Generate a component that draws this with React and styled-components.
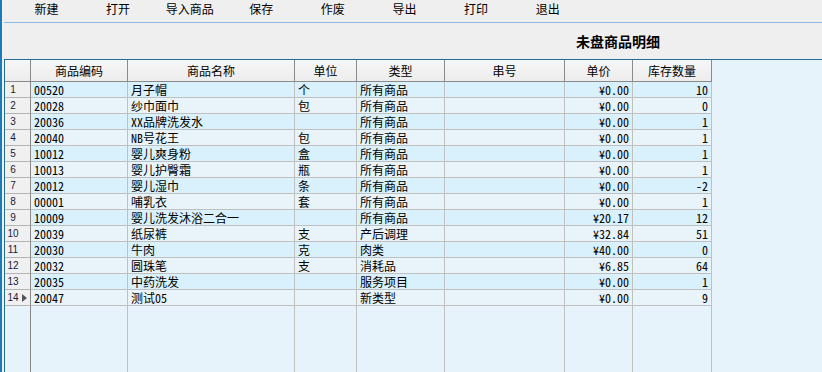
import styled, { createGlobalStyle } from "styled-components"

const GlobalStyle = createGlobalStyle`
  html, body {
    margin: 0;
    padding: 0;
    background: #efefef;
  }
  body {
    font-family: "Noto Sans Mono CJK SC", "Noto Sans CJK SC", sans-serif;
    font-size: 12px;
    color: #000;
  }
`

const COLS = "26px 97px 167px 62px 88px 120px 68px 79px"

const Frame = styled.div`
  height: 372px;
  box-sizing: border-box;
  border-left: 2px solid #1c7ab6;
  padding-left: 2px;
  display: flex;
  flex-direction: column;
  overflow: hidden;
`
const MenuBar = styled.div`
  height: 22px;
  border-bottom: 1px solid #8cb9e8;
  display: flex;
  padding-left: 6.7px;
`
const MenuItem = styled.div`
  width: 71.6px;
  text-align: center;
  line-height: 17px;
  cursor: default;
  white-space: nowrap;
`
const TitleRow = styled.div`
  height: 36px;
  display: flex;
  align-items: center;
  padding-left: 572px;
`
const Title = styled.h1`
  margin: 0;
  font-size: 14px;
  font-weight: bold;
  font-family: "Noto Sans CJK SC", sans-serif;
`
const Grid = styled.div`
  flex: 1;
  display: flex;
  flex-direction: column;
  border-top: 1px solid #226e95;
  border-left: 1px solid #226e95;
  background: #e6f3fa;
`
const Row = styled.div`
  display: grid;
  grid-template-columns: ${COLS};
  width: max-content;
`
const HeadCell = styled.div`
  height: 21px;
  line-height: 21px;
  text-align: center;
  background: linear-gradient(#f7f7f7, #ececec);
  border-right: 1px solid #8a8a8a;
  border-bottom: 1px solid #8a8a8a;
  white-space: nowrap;
  overflow: hidden;
`
const Cell = styled.div`
  height: 15px;
  line-height: 15px;
  padding: 0 ${(p) => (p.$right ? "3px" : "0")} 0 ${(p) => (p.$right ? "0" : "3px")};
  text-align: ${(p) => (p.$right ? "right" : "left")};
  background: ${(p) => (p.$odd ? "#d8f1fc" : "#e8f4f9")};
  border-right: 1px solid #c0c0c0;
  border-bottom: 1px solid #c0c0c0;
  white-space: nowrap;
  overflow: hidden;
`
const Indicator = styled.div`
  height: 15px;
  display: flex;
  align-items: center;
  background: #f0f0f0;
  border-right: 1px solid #8a8a8a;
  border-bottom: 1px solid #b4b4b4;
`
const RowNum = styled.span`
  width: 16px;
  text-align: center;
  font-family: "Liberation Sans", Arial, sans-serif;
  font-size: 10px;
  color: #1a1a3a;
`
const Marker = styled.svg`
  margin-left: 1px;
`
const FillRow = styled(Row)`
  flex: 1;
`
const FillCell = styled.div`
  border-right: 1px solid ${(p) => (p.$dark ? "#8a8a8a" : "#c0c0c0")};
`

const menu = ["新建", "打开", "导入商品", "保存", "作废", "导出", "打印", "退出"]
const headers = ["商品编码", "商品名称", "单位", "类型", "串号", "单价", "库存数量"]

const rows = [
  ["00520", "月子帽", "个", "所有商品", "", "¥0.00", "10"],
  ["20028", "纱巾面巾", "包", "所有商品", "", "¥0.00", "0"],
  ["20036", "XX品牌洗发水", "", "所有商品", "", "¥0.00", "1"],
  ["20040", "NB号花王", "包", "所有商品", "", "¥0.00", "1"],
  ["10012", "婴儿爽身粉", "盒", "所有商品", "", "¥0.00", "1"],
  ["10013", "婴儿护臀霜", "瓶", "所有商品", "", "¥0.00", "1"],
  ["20012", "婴儿湿巾", "条", "所有商品", "", "¥0.00", "-2"],
  ["00001", "哺乳衣", "套", "所有商品", "", "¥0.00", "1"],
  ["10009", "婴儿洗发沐浴二合一", "", "所有商品", "", "¥20.17", "12"],
  ["20039", "纸尿裤", "支", "产后调理", "", "¥32.84", "51"],
  ["20030", "牛肉", "克", "肉类", "", "¥40.00", "0"],
  ["20032", "圆珠笔", "支", "消耗品", "", "¥6.85", "64"],
  ["20035", "中药洗发", "", "服务项目", "", "¥0.00", "1"],
  ["20047", "测试05", "", "新类型", "", "¥0.00", "9"],
]

export default function App() {
  const current = rows.length - 1

  return (
    <>
      <GlobalStyle />
      <Frame>
        <MenuBar>
          {menu.map((m) => (
            <MenuItem key={m}>{m}</MenuItem>
          ))}
        </MenuBar>
        <TitleRow>
          <Title>未盘商品明细</Title>
        </TitleRow>
        <Grid>
          <Row>
            <HeadCell />
            {headers.map((h) => (
              <HeadCell key={h}>{h}</HeadCell>
            ))}
          </Row>
          {rows.map((r, i) => {
            const odd = i % 2 === 0
            return (
              <Row key={i}>
                <Indicator>
                  <RowNum>{i + 1}</RowNum>
                  {i === current && (
                    <Marker width="5" height="8" viewBox="0 0 5 8">
                      <path d="M0 0 L5 4 L0 8 Z" fill="#555" />
                    </Marker>
                  )}
                </Indicator>
                {r.map((v, j) => (
                  <Cell key={j} $odd={odd} $right={j >= 5}>
                    {v}
                  </Cell>
                ))}
              </Row>
            )
          })}
          <FillRow>
            <FillCell $dark />
            {headers.map((h) => (
              <FillCell key={h} />
            ))}
          </FillRow>
        </Grid>
      </Frame>
    </>
  )
}
